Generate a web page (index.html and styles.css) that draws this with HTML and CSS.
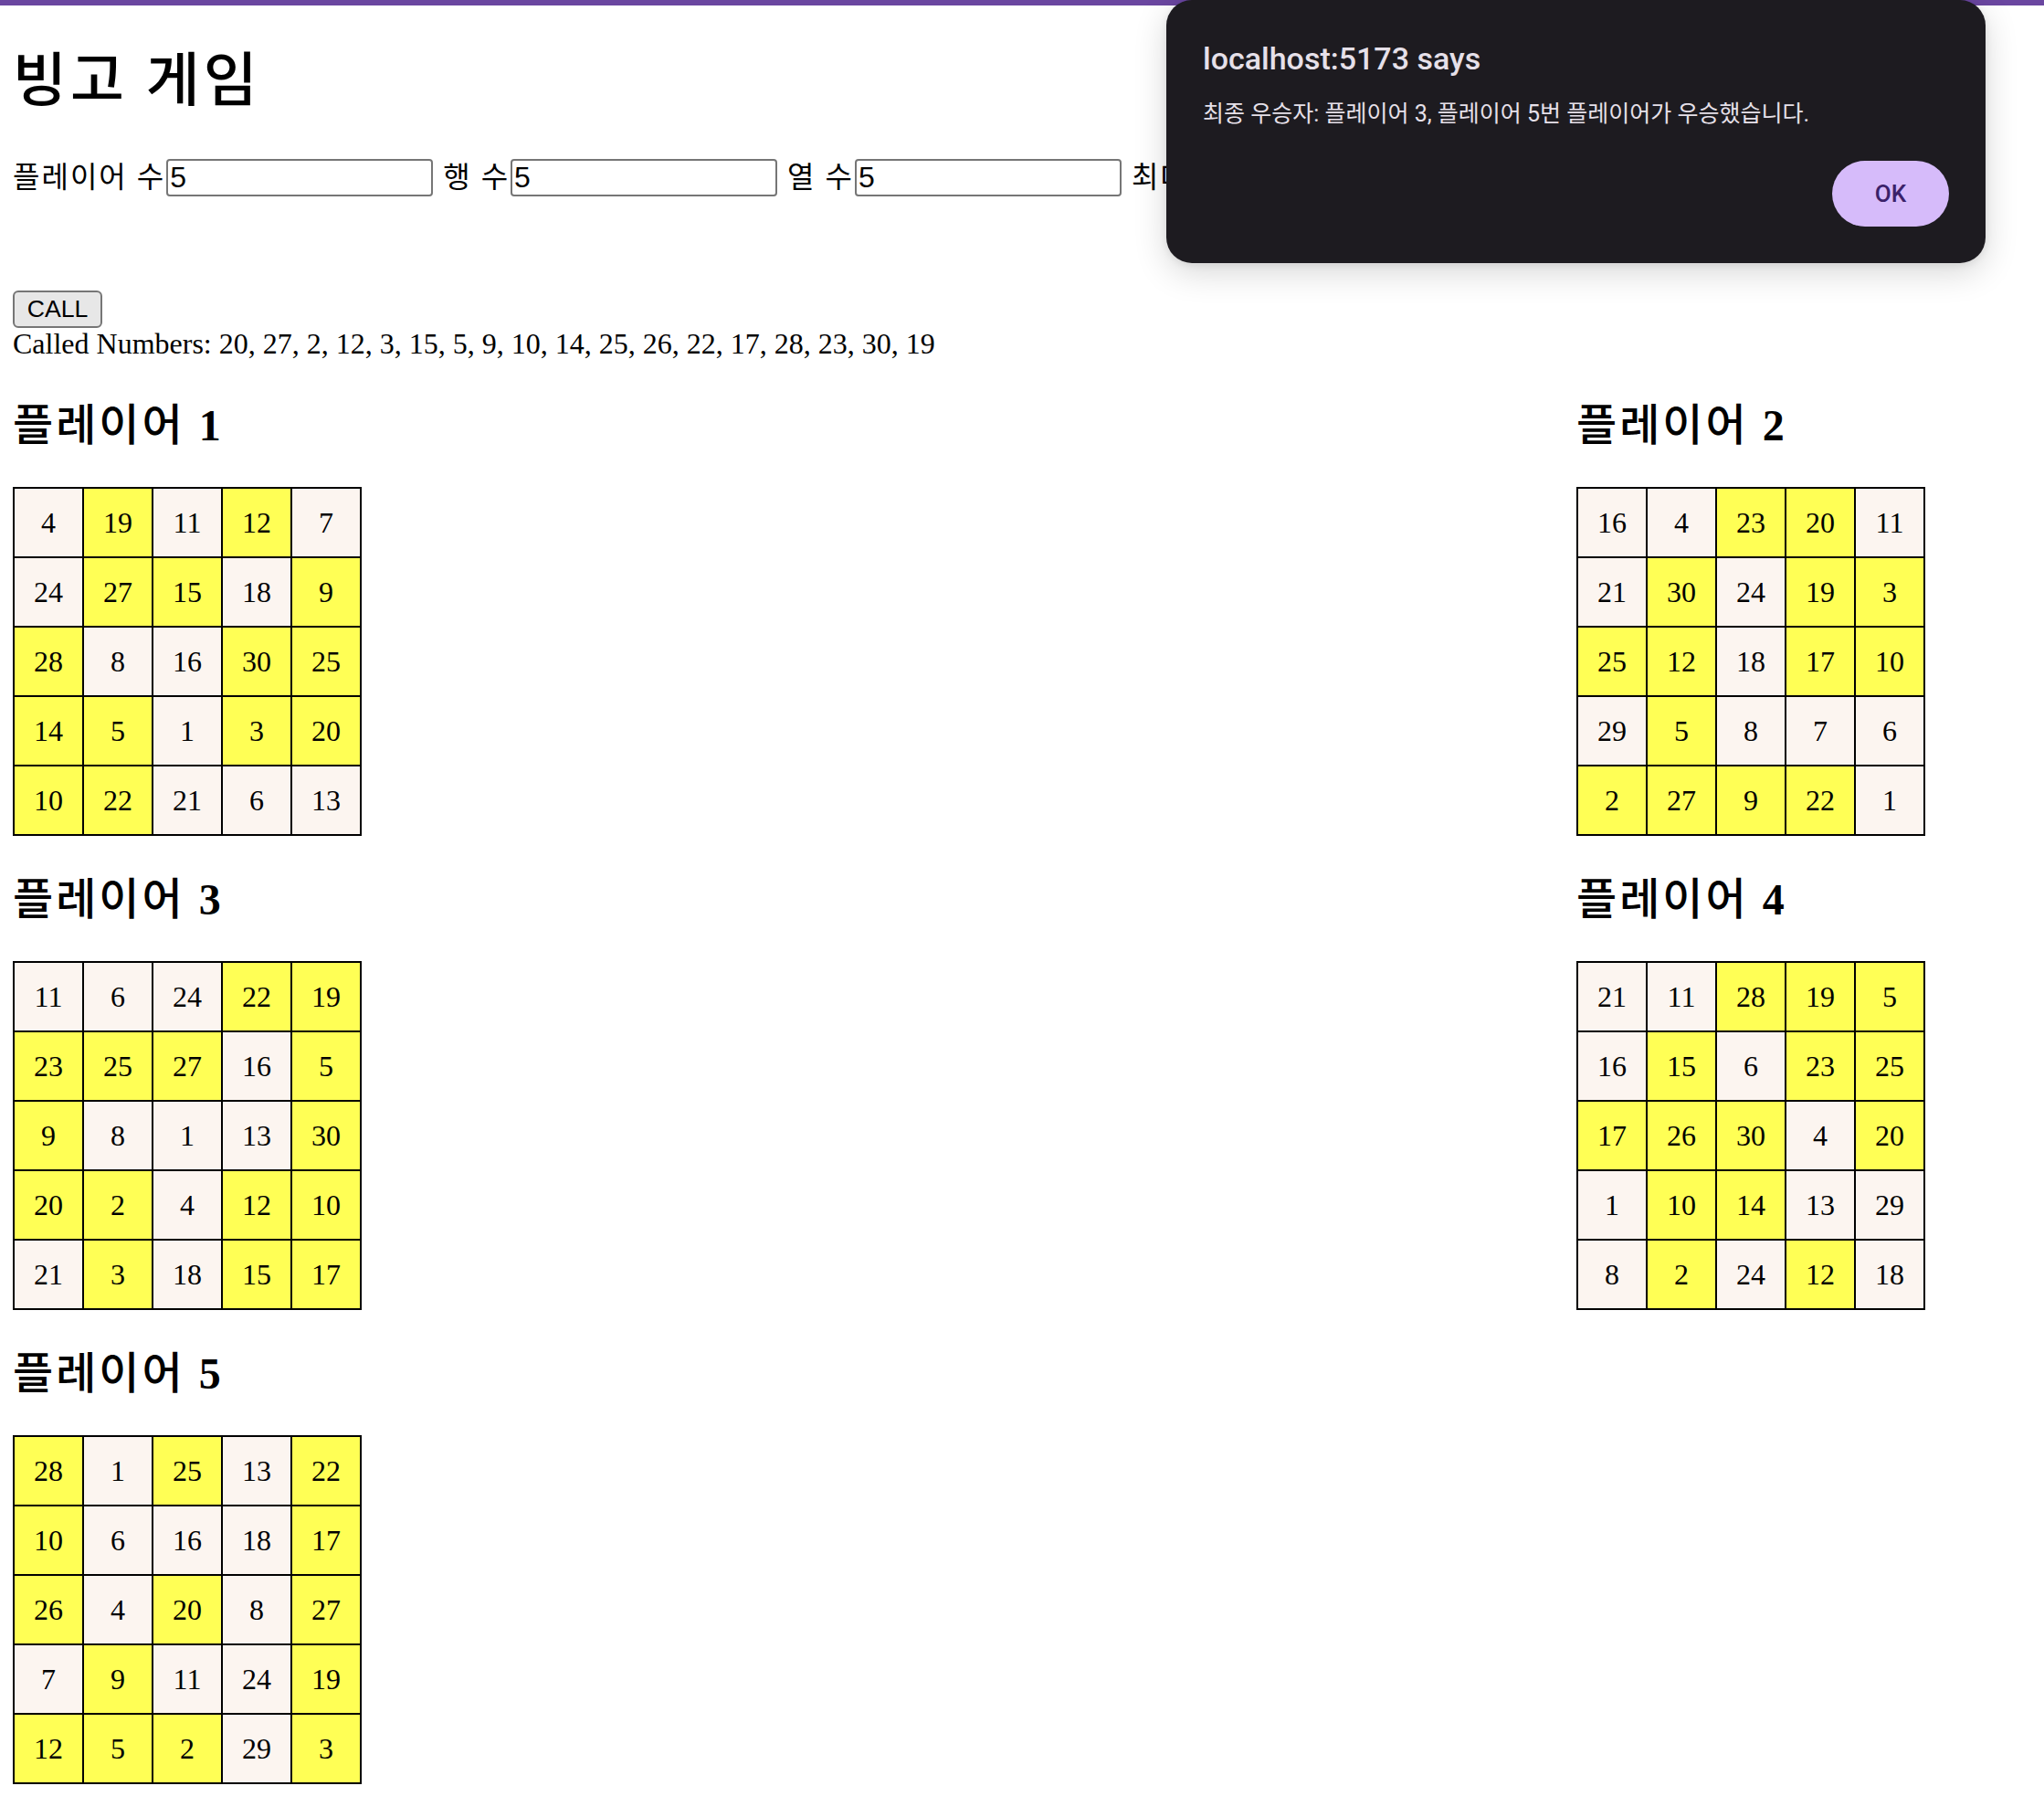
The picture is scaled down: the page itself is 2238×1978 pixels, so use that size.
FILE: index.html
```html
<!DOCTYPE html>
<html lang="ko">
<head>
<meta charset="utf-8">
<title>빙고 게임</title>
<link rel="stylesheet" href="styles.css">
</head>
<body>
<div class="topbar"></div>
<main class="page">
  <h1 class="title">빙고 게임</h1>
  <div class="controls">
    <label class="field">플레이어 수<input class="num-input" type="text" value="5"></label>
    <label class="field">행 수<input class="num-input" type="text" value="5"></label>
    <label class="field">열 수<input class="num-input" type="text" value="5"></label>
    <label class="field">최대 숫자<input class="num-input" type="text" value="30"></label>
  </div>
  <div class="call-row"><button class="call-btn" type="button">CALL</button></div>
  <div class="called">Called Numbers: 20, 27, 2, 12, 3, 15, 5, 9, 10, 14, 25, 26, 22, 17, 28, 23, 30, 19</div>

  <div class="players">
    <section class="player">
      <h2 class="player-name">플레이어 <span class="player-no">1</span></h2>
      <table class="board">
        <tr><td>4</td><td class="hit">19</td><td>11</td><td class="hit">12</td><td>7</td></tr>
        <tr><td>24</td><td class="hit">27</td><td class="hit">15</td><td>18</td><td class="hit">9</td></tr>
        <tr><td class="hit">28</td><td>8</td><td>16</td><td class="hit">30</td><td class="hit">25</td></tr>
        <tr><td class="hit">14</td><td class="hit">5</td><td>1</td><td class="hit">3</td><td class="hit">20</td></tr>
        <tr><td class="hit">10</td><td class="hit">22</td><td>21</td><td>6</td><td>13</td></tr>
      </table>
    </section>
    <section class="player">
      <h2 class="player-name">플레이어 <span class="player-no">2</span></h2>
      <table class="board">
        <tr><td>16</td><td>4</td><td class="hit">23</td><td class="hit">20</td><td>11</td></tr>
        <tr><td>21</td><td class="hit">30</td><td>24</td><td class="hit">19</td><td class="hit">3</td></tr>
        <tr><td class="hit">25</td><td class="hit">12</td><td>18</td><td class="hit">17</td><td class="hit">10</td></tr>
        <tr><td>29</td><td class="hit">5</td><td>8</td><td>7</td><td>6</td></tr>
        <tr><td class="hit">2</td><td class="hit">27</td><td class="hit">9</td><td class="hit">22</td><td>1</td></tr>
      </table>
    </section>
    <section class="player">
      <h2 class="player-name">플레이어 <span class="player-no">3</span></h2>
      <table class="board">
        <tr><td>11</td><td>6</td><td>24</td><td class="hit">22</td><td class="hit">19</td></tr>
        <tr><td class="hit">23</td><td class="hit">25</td><td class="hit">27</td><td>16</td><td class="hit">5</td></tr>
        <tr><td class="hit">9</td><td>8</td><td>1</td><td>13</td><td class="hit">30</td></tr>
        <tr><td class="hit">20</td><td class="hit">2</td><td>4</td><td class="hit">12</td><td class="hit">10</td></tr>
        <tr><td>21</td><td class="hit">3</td><td>18</td><td class="hit">15</td><td class="hit">17</td></tr>
      </table>
    </section>
    <section class="player">
      <h2 class="player-name">플레이어 <span class="player-no">4</span></h2>
      <table class="board">
        <tr><td>21</td><td>11</td><td class="hit">28</td><td class="hit">19</td><td class="hit">5</td></tr>
        <tr><td>16</td><td class="hit">15</td><td>6</td><td class="hit">23</td><td class="hit">25</td></tr>
        <tr><td class="hit">17</td><td class="hit">26</td><td class="hit">30</td><td>4</td><td class="hit">20</td></tr>
        <tr><td>1</td><td class="hit">10</td><td class="hit">14</td><td>13</td><td>29</td></tr>
        <tr><td>8</td><td class="hit">2</td><td>24</td><td class="hit">12</td><td>18</td></tr>
      </table>
    </section>
    <section class="player">
      <h2 class="player-name">플레이어 <span class="player-no">5</span></h2>
      <table class="board">
        <tr><td class="hit">28</td><td>1</td><td class="hit">25</td><td>13</td><td class="hit">22</td></tr>
        <tr><td class="hit">10</td><td>6</td><td>16</td><td>18</td><td class="hit">17</td></tr>
        <tr><td class="hit">26</td><td>4</td><td class="hit">20</td><td>8</td><td class="hit">27</td></tr>
        <tr><td>7</td><td class="hit">9</td><td>11</td><td>24</td><td class="hit">19</td></tr>
        <tr><td class="hit">12</td><td class="hit">5</td><td class="hit">2</td><td>29</td><td class="hit">3</td></tr>
      </table>
    </section>
  </div>
</main>

<div class="alert" role="alertdialog">
  <div class="alert-title">localhost:5173 says</div>
  <div class="alert-msg">최종 우승자: 플레이어 3, 플레이어 5번 플레이어가 우승했습니다.</div>
  <div class="alert-actions"><button class="alert-ok" type="button">OK</button></div>
</div>
</body>
</html>
```

FILE: styles.css
```css
* { box-sizing: border-box; }

html, body {
  margin: 0;
  padding: 0;
  background: #ffffff;
}

body {
  font-family: "Liberation Serif", "Noto Sans CJK KR", serif;
  font-size: 32px;
  color: #000;
  position: relative;
}

.topbar {
  height: 6px;
  background: #6a46a0;
}

.page {
  padding: 0 14px;
}

.title {
  font-size: 64px;
  font-weight: 500;
  line-height: 77px;
  letter-spacing: 4px;
  margin: 44px 0 0;
}

.controls {
  display: flex;
  align-items: baseline;
  margin-top: 41px;
  white-space: nowrap;
}

.field {
  font-size: 32px;
  letter-spacing: 2px;
  margin-right: 11px;
}

.num-input {
  width: 292px;
  height: 41px;
  margin: 0 0 0 1px;
  padding: 0 2px;
  border: 2px solid #767676;
  border-radius: 4px;
  font-family: "Liberation Sans", Arial, sans-serif;
  font-size: 32px;
  letter-spacing: 0;
  color: #000;
  background: #fff;
  vertical-align: baseline;
}

.call-row {
  margin-top: 103px;
  height: 41px;
}

.call-btn {
  height: 41px;
  width: 98px;
  padding: 0;
  border: 2px solid #767676;
  border-radius: 6px;
  background: #e7e7e7;
  font-family: "Liberation Sans", Arial, sans-serif;
  font-size: 26.67px;
  color: #000;
}

.called {
  line-height: 39px;
  margin-top: -2px;
}

.players {
  display: grid;
  grid-template-columns: 1fr 498px;
}

.player-name {
  font-size: 48px;
  font-weight: 500;
  line-height: 60px;
  letter-spacing: 3px;
  margin: 40px 0 37px;
}

.player-no {
  font-weight: 700;
}

.board {
  border-collapse: collapse;
}

.board td {
  width: 76px;
  height: 76px;
  padding: 0;
  border: 2px solid #000;
  background: #fcf5f0;
  text-align: center;
  vertical-align: middle;
  font-size: 32px;
}

.board td.hit {
  background: #ffff55;
}

/* browser alert dialog */
.alert {
  position: absolute;
  top: 0;
  left: 1277px;
  width: 897px;
  height: 288px;
  padding: 44px 40px 40px;
  background: #1d1b20;
  border-radius: 28px;
  box-shadow: 0 10px 36px rgba(0, 0, 0, 0.16), 0 2px 8px rgba(0, 0, 0, 0.08);
  display: flex;
  flex-direction: column;
  color: #e6e0e9;
}

.alert-title {
  font-family: Roboto, "Noto Sans CJK KR", sans-serif;
  font-size: 34px;
  font-weight: 500;
  line-height: 40px;
}

.alert-msg {
  font-family: Roboto, "Noto Sans CJK KR", sans-serif;
  font-size: 25px;
  line-height: 32px;
  margin-top: 25px;
}

.alert-actions {
  margin-top: auto;
  display: flex;
  justify-content: flex-end;
}

.alert-ok {
  width: 128px;
  height: 72px;
  border: 0;
  border-radius: 36px;
  background: #d6bbfa;
  color: #3b2169;
  font-family: Roboto, sans-serif;
  font-size: 26px;
  font-weight: 500;
  padding: 0;
}
```
